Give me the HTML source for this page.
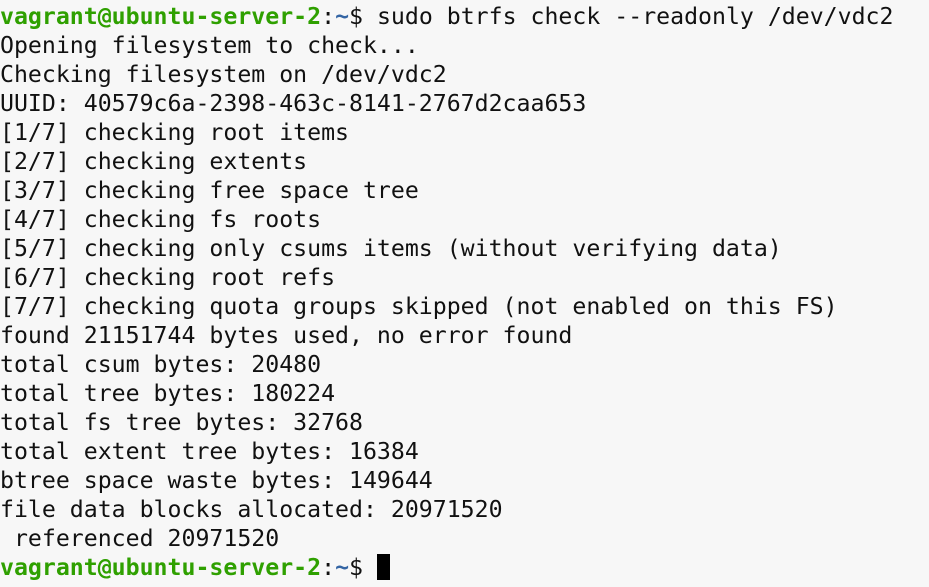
<!DOCTYPE html>
<html><head><style>
html,body{margin:0;padding:0;background:#f7f7f7;width:929px;height:587px;overflow:hidden}
pre{margin:0;position:absolute;left:0;top:2px;font-family:"DejaVu Sans Mono","Liberation Mono",monospace;font-size:23.2px;line-height:29px;color:#111}
.g{color:#2fa000;font-weight:bold}.b{color:#3465a4;font-weight:bold}
.cur{display:inline-block;width:13px;height:26px;background:#000;vertical-align:-5px}
</style></head><body>
<pre><span class="g">vagrant@ubuntu-server-2</span>:<span class="b">~</span>$ sudo btrfs check --readonly /dev/vdc2
Opening filesystem to check...
Checking filesystem on /dev/vdc2
UUID: 40579c6a-2398-463c-8141-2767d2caa653
[1/7] checking root items
[2/7] checking extents
[3/7] checking free space tree
[4/7] checking fs roots
[5/7] checking only csums items (without verifying data)
[6/7] checking root refs
[7/7] checking quota groups skipped (not enabled on this FS)
found 21151744 bytes used, no error found
total csum bytes: 20480
total tree bytes: 180224
total fs tree bytes: 32768
total extent tree bytes: 16384
btree space waste bytes: 149644
file data blocks allocated: 20971520
 referenced 20971520
<span class="g">vagrant@ubuntu-server-2</span>:<span class="b">~</span>$ <span class="cur"></span></pre>
</body></html>
